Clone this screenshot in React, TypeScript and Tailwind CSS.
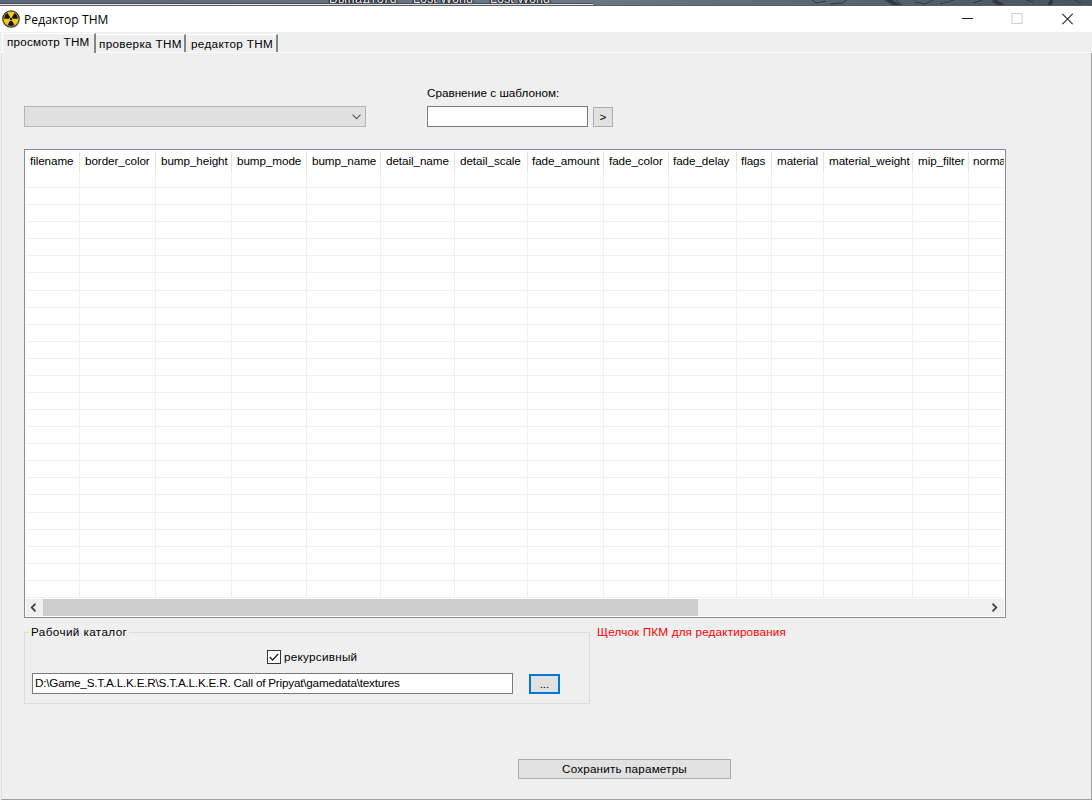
import type { ReactNode } from "react";
import clsx from "clsx";

const COLUMNS = [
  { name: "filename", width: 54, pad: "pl-[4px]" },
  { name: "border_color", width: 76, pad: "pl-[5px]" },
  { name: "bump_height", width: 76, pad: "pl-[5px]" },
  { name: "bump_mode", width: 75, pad: "pl-[5px]" },
  { name: "bump_name", width: 74, pad: "pl-[5px]" },
  { name: "detail_name", width: 74, pad: "pl-[5px]" },
  { name: "detail_scale", width: 73, pad: "pl-[5px]" },
  { name: "fade_amount", width: 76, pad: "pl-[4px]" },
  { name: "fade_color", width: 65, pad: "pl-[5px]" },
  { name: "fade_delay", width: 68, pad: "pl-[4px]" },
  { name: "flags", width: 35, pad: "pl-[4px]" },
  { name: "material", width: 52, pad: "pl-[5px]" },
  { name: "material_weight", width: 89, pad: "pl-[5px]" },
  { name: "mip_filter", width: 56, pad: "pl-[5px]" },
  { name: "normal_map", width: 80, pad: "pl-[4px]" },
];

const ROWS = Array.from({ length: 25 }, (_, i) => i);

function RadiationIcon() {
  return (
    <svg className="h-[18px] w-[18px] shrink-0" viewBox="0 0 18 18">
      <circle cx="9" cy="9" r="8.2" fill="#f5c81c" stroke="#3d3a35" strokeWidth="1.3" />
      <g fill="#15130c">
        <path d="M7.2 8.7H2.2A6.8 6.8 0 0 1 5.5 3.1L8.1 7.3A2 2 0 0 0 7.2 8.7Z" />
        <path d="M10.8 8.7h5A6.8 6.8 0 0 0 12.5 3.1L9.9 7.3a2 2 0 0 1 .9 1.4Z" />
        <path d="M8 10.8 5.6 15a6.8 6.8 0 0 0 6.8 0L10 10.8a2 2 0 0 1-2 0Z" />
        <circle cx="9" cy="9" r="1.2" />
      </g>
    </svg>
  );
}

// Strip of the desktop that stays visible above the window
function Desktop() {
  return (
    <div className="relative h-[5px] shrink-0 overflow-hidden bg-gradient-to-r from-[#566778] via-[#6a7b8b] to-[#465460]">
      <div className="absolute top-[-8px] left-[329px] flex text-[12.6px] leading-[15px] text-[#e8e8e8] [text-shadow:1px_1px_1px_#000,-1px_0_1px_#000]">
        <span className="w-[84px] tracking-[0.6px]">Выпадтогd</span>
        <span className="w-[77px]">Lost World</span>
        <span>Lost World</span>
      </div>
      <svg className="absolute top-0 right-0" width="392" height="5" viewBox="0 0 392 5" fill="none" stroke="#303740">
        <path d="M112 0l4 3 10-2M147 0l-5 3-12 1M185 0l9 5M196 0l6 5M215 2l10 2 8-4M240 4l14-4M273 3l9-3M326 0l7 2M375 0l6 3" />
        <path strokeWidth="4" d="M188 0l11 6M293 0l10 6M352 0l-3 6" />
      </svg>
      <div className="absolute bottom-0 left-0 h-[2px] w-[593px] border-t border-[#4a4d52] bg-[#e6e6e6]" />
    </div>
  );
}

function TitleBar() {
  return (
    <header className="flex h-[27px] shrink-0 items-center border-t border-[#5b5b60] bg-white pl-[2px]">
      <RadiationIcon />
      <h1 className="ml-[4px] pt-px font-['Open_Sans'] text-[12px] leading-[18px] tracking-[0.1px] whitespace-nowrap">
        Редактор THM
      </h1>
      <div className="ml-auto flex items-center pr-[19px]">
        <svg width="11" height="11" viewBox="0 0 11 11" stroke="#222">
          <path d="M0 4.5h11" />
        </svg>
        <svg className="ml-[38px]" width="12" height="12" viewBox="0 0 12 12" fill="none" stroke="#cfcfcf">
          <rect x="1" y=".5" width="10" height="10" />
        </svg>
        <svg className="ml-[39px]" width="11" height="12" viewBox="0 0 11 12" fill="none" stroke="#222" strokeWidth="1.1">
          <path d="M.3.8l10.4 10.4M10.7.8.3 11.2" />
        </svg>
      </div>
    </header>
  );
}

function Tabs() {
  return (
    <nav className="flex h-[21px] shrink-0 items-end border-b border-white pl-[2px] whitespace-nowrap">
      <div className="-mb-px h-[20px] w-[94px] border-t border-l border-r-2 border-t-white border-l-white border-r-[#858585] bg-[#efefef] pl-[4px] leading-[16px] tracking-[0.22px]">
        просмотр THM
      </div>
      <div className="h-[18px] w-[90px] border-t border-r-2 border-t-white border-r-[#858585] pl-[3px] leading-[17px] tracking-[0.33px]">
        проверка THM
      </div>
      <div className="h-[18px] w-[92px] border-t border-r-2 border-t-white border-r-[#858585] pl-[5px] leading-[17px] tracking-[0.33px]">
        редактор THM
      </div>
    </nav>
  );
}

function Button({ className, children }: { className?: string; children: ReactNode }) {
  return (
    <button className={clsx("flex items-center justify-center border border-[#adadad] bg-[#e1e1e1]", className)}>
      {children}
    </button>
  );
}

function Grid() {
  return (
    <div className="mt-[22px] flex h-[469px] w-[982px] flex-col border border-[#878c99] bg-white px-px pb-px">
      <div className="flex h-[21px] shrink-0 overflow-hidden pt-[2px]">
        {COLUMNS.map((col) => (
          <div
            key={col.name}
            style={{ width: col.width }}
            className={clsx(
              "shrink-0 border-r border-[#e4e4e4] leading-[17px] tracking-[-0.08px] whitespace-nowrap",
              col.pad,
            )}
          >
            {col.name}
          </div>
        ))}
      </div>
      <div className="flex h-[427px] shrink-0 flex-col overflow-hidden">
        {ROWS.map((row) => (
          <div key={row} className="flex h-[17.08px] shrink-0 border-b border-[#f0f0f0]">
            {COLUMNS.map((col) => (
              <div key={col.name} style={{ width: col.width }} className="shrink-0 border-r border-[#f0f0f0]" />
            ))}
          </div>
        ))}
      </div>
      <div className="mt-px flex h-[17px] shrink-0 items-center bg-[#f0f0f0]">
        <svg className="ml-[4px]" width="7" height="9" viewBox="0 0 7 9" fill="none" stroke="#444" strokeWidth="1.8">
          <path d="M5.5.7 1.7 4.5l3.8 3.8" />
        </svg>
        <div className="ml-[6px] h-[17px] w-[655px] bg-[#cdcdcd]" />
        <svg className="mr-[6px] ml-auto" width="7" height="9" viewBox="0 0 7 9" fill="none" stroke="#444" strokeWidth="1.8">
          <path d="M1.5.7l3.8 3.8-3.8 3.8" />
        </svg>
      </div>
    </div>
  );
}

function WorkFolder() {
  return (
    <fieldset className="h-[79px] w-[566px] shrink-0 border border-[#dcdcdc] px-[7px]">
      <legend className="-ml-[3px] h-[14px] px-[2px] leading-[14px] tracking-[0.4px]">Рабочий каталог</legend>
      <label className="mt-[11px] ml-[235px] flex h-[14px] items-center">
        <svg width="14" height="14" viewBox="0 0 14 14" fill="none">
          <rect x=".5" y=".5" width="13" height="13" fill="#fff" stroke="#333" />
          <path d="M2.8 7l2.8 3 5.6-6" stroke="#222" strokeWidth="1.3" />
        </svg>
        <span className="ml-[3px] tracking-[0.27px]">рекурсивный</span>
      </label>
      <div className="mt-[9px] flex items-center">
        <div className="h-[21px] w-[481px] border border-[#7a7a7a] bg-white pl-[2px] leading-[17px] tracking-[-0.2px] whitespace-nowrap">
          D:\Game_S.T.A.L.K.E.R\S.T.A.L.K.E.R. Call of Pripyat\gamedata\textures
        </div>
        <button className="ml-[16px] h-[20px] w-[31px] border-2 border-[#0078d7] bg-[#e1e1e1] leading-[16px]">
          ...
        </button>
      </div>
    </fieldset>
  );
}

export default function App() {
  return (
    <div className="flex h-[800px] w-[1092px] flex-col overflow-hidden bg-[#efefef] font-['Liberation_Sans',sans-serif] text-[11.7px] leading-[14px] text-black">
      <Desktop />
      <TitleBar />
      <Tabs />
      <main className="ml-px flex flex-1 flex-col border-r border-b border-l border-r-[#a0a0a0] border-b-[#a0a0a0] border-l-[#e0e0e0] pl-[22px]">
        <div className="flex h-[74px] shrink-0 items-end">
          <div className="flex h-[21px] w-[342px] items-center justify-end border border-[#b4b4b4] bg-[#e0e0e0] pr-[4px]">
            <svg width="9" height="6" viewBox="0 0 9 6" fill="none" stroke="#555" strokeWidth="1.1">
              <path d="M.5.7l4 4 4-4" />
            </svg>
          </div>
          <div className="ml-[61px] w-[161px]">
            <div className="mb-[6px] whitespace-nowrap">Сравнение с шаблоном:</div>
            <div className="h-[21px] border border-[#7a7a7a] bg-white" />
          </div>
          <Button className="ml-[5px] h-[20px] w-[20px]">&gt;</Button>
        </div>
        <Grid />
        <div className="mt-[7px] flex">
          <WorkFolder />
          <p className="ml-[7px] leading-[14px] tracking-[0.17px] whitespace-nowrap text-[#ff0000]">
            Щелчок ПКМ для редактирования
          </p>
        </div>
        <Button className="mt-[55px] ml-[494px] h-[20px] w-[213px] tracking-[0.17px]">Сохранить параметры</Button>
      </main>
    </div>
  );
}
